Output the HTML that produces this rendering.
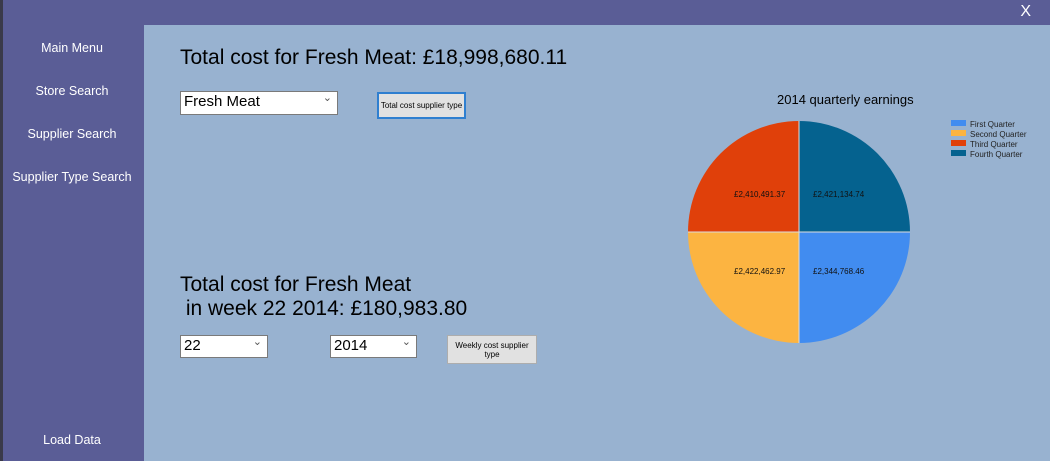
<!DOCTYPE html>
<html><head><style>
body{margin:0;width:1050px;height:461px;background:#5a5d96;position:relative;overflow:hidden;font-family:"Liberation Sans",sans-serif}
.a{position:absolute}
.nav{color:#fff;font-size:12.5px;text-align:center;width:144px;left:0}
.main{left:144px;top:25px;width:906px;height:436px;background:#98b2d0}
.sel{background:#fff;border:1px solid #7a7a7a;box-sizing:border-box;font-size:15px;padding:1px 3px}
.sel:after{content:"⌄";position:absolute;right:5px;top:-1px;font-size:11px;color:#555}
.btn{background:#e1e1e1;border:1px solid #adadad;box-sizing:border-box;font-size:8px;text-align:center;display:flex;align-items:center;justify-content:center}
.t{font-size:21px;color:#000}
</style></head><body>
<div class="a" style="left:0;top:0;width:3px;height:461px;background:#3a3a4a"></div>
<div class="a" style="right:19px;top:3px;color:#fff;font-size:16px">X</div>
<div class="a nav" style="top:41px">Main Menu</div>
<div class="a nav" style="top:84px">Store Search</div>
<div class="a nav" style="top:127px">Supplier Search</div>
<div class="a nav" style="top:170px">Supplier Type Search</div>
<div class="a nav" style="top:433px">Load Data</div>
<div class="a main"></div>
<div class="a t" style="left:180px;top:46px">Total cost for Fresh Meat: £18,998,680.11</div>
<div class="a sel" style="left:180px;top:91px;width:158px;height:24px">Fresh Meat</div>
<div class="a btn" style="left:377px;top:92px;width:89px;height:27px;border:2px solid #2f7fd0">Total cost supplier type</div>
<div class="a t" style="left:180px;top:273px;line-height:24px">Total cost for Fresh Meat<br>&nbsp;in week 22 2014: £180,983.80</div>
<div class="a sel" style="left:180px;top:335px;width:88px;height:23px">22</div>
<div class="a sel" style="left:330px;top:335px;width:87px;height:23px">2014</div>
<div class="a btn" style="left:447px;top:335px;width:90px;height:29px">Weekly cost supplier<br>type</div>
<div class="a" style="left:777px;top:92px;font-size:13px">2014 quarterly earnings</div>
<svg class="a" style="left:0;top:0" width="1050" height="461">
<path d="M799 232 V121 A111 111 0 0 1 910 232Z" fill="#05628f"/>
<path d="M799 232 H910 A111 111 0 0 1 799 343Z" fill="#418cf0"/>
<path d="M799 232 V343 A111 111 0 0 1 688 232Z" fill="#fcb441"/>
<path d="M799 232 H688 A111 111 0 0 1 799 121Z" fill="#e0400a"/>
<path d="M799 121V343M688 232H910" stroke="#ddd" stroke-width="1"/>
<g font-size="8" font-family="Liberation Sans" fill="#111">
<text x="734" y="197">£2,410,491.37</text><text x="813" y="197">£2,421,134.74</text>
<text x="734" y="274">£2,422,462.97</text><text x="813" y="274">£2,344,768.46</text>
</g>
<rect x="951" y="120" width="15" height="6" fill="#418cf0"/>
<rect x="951" y="130" width="15" height="6" fill="#fcb441"/>
<rect x="951" y="140" width="15" height="6" fill="#e0400a"/>
<rect x="951" y="150" width="15" height="6" fill="#05628f"/>
<g font-size="8" font-family="Liberation Sans" fill="#222">
<text x="970" y="127">First Quarter</text><text x="970" y="137">Second Quarter</text>
<text x="970" y="147">Third Quarter</text><text x="970" y="157">Fourth Quarter</text>
</g>
</svg>
</body></html>
